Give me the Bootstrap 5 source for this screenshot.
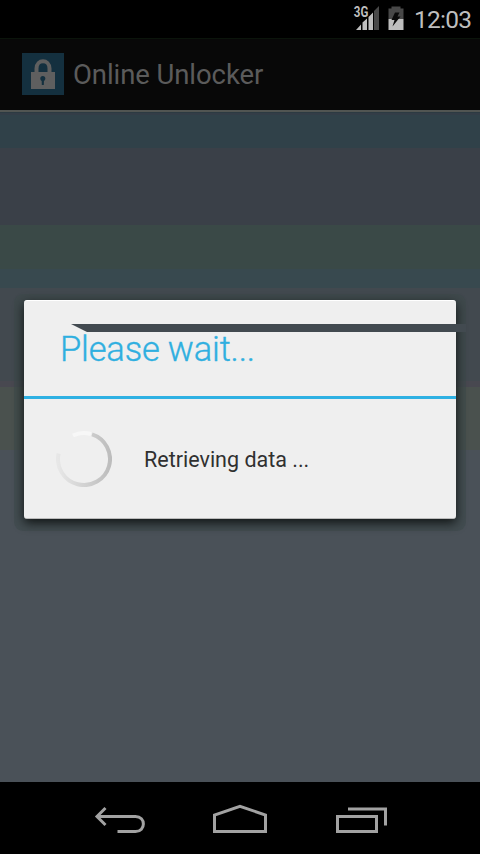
<!DOCTYPE html>
<html lang="en">
<head>
<meta charset="utf-8">
<meta name="viewport" content="width=device-width, initial-scale=1">
<title>Online Unlocker</title>
<link rel="stylesheet" href="https://cdn.jsdelivr.net/npm/bootstrap@5.3.0/dist/css/bootstrap.min.css">
<style>
body{font-family:Roboto,sans-serif;background:#000;width:480px;height:854px}
.txt{line-height:1;white-space:nowrap;display:block}
.status{height:38px;padding-right:9px}
.clock{font-size:24.5px;letter-spacing:-.75px;color:#bebebe;margin-left:9px;width:57px;padding-top:2px}
.appbar{height:72px;background:#080808;border-top:1px solid #0b140b;padding:0 0 0 22px}
.appbar-wrap{border-bottom:1px solid #2c3a42}
.lock{margin-bottom:2px}
.apptitle{font-size:27.5px;letter-spacing:-.08px;color:#5b5b5b;margin-left:9px;padding-top:1px}
.rule{height:2px;background:#515552}
.screen{height:669px;background:linear-gradient(#333d47 0 2px,#304149 2px 35px,#3a4048 35px 112px,#3a4947 112px 156px,#38494f 156px 175px,#42494f 175px 268px,#484850 268px 274px,#4a514e 274px 337px,#4a5158 337px)}
.glow{left:14px;top:294px;width:452px;height:237px;border-radius:9px;background:#3c4a4980}
.wait{left:24px;top:300px;width:432px;height:219px;border-radius:3px;background:#efefef;border-top:1px solid #fff;border-bottom:1px solid #bbb;box-shadow:0 4px 11px #101414}
.wait-head{height:98px;border-bottom:3px solid #2fb1e3;padding:31px 0 0 36px}
.wait-title{font-size:34.5px;font-weight:300;letter-spacing:-.17px;color:#2fafe0;-webkit-text-stroke:.35px #2fafe0}
.wait-text{font-size:21.5px;color:#303030;margin-left:32px;padding-top:2px}
.slash{left:71px;top:324px;width:395px;height:8px;background:#424a50;clip-path:polygon(0 0,100% 0,100% 100%,16px 100%)}
.ring{width:56px;height:56px;margin-left:32px}
.wait-body{height:119px}
.keys{height:72px}
</style>
<script src="https://cdn.jsdelivr.net/npm/bootstrap@5.3.0/dist/js/bootstrap.bundle.min.js"></script>
</head>
<body class="m-0 overflow-hidden position-relative d-flex flex-column">
<div class="status d-flex align-items-center justify-content-end flex-shrink-0">
<svg width="52" height="38" viewBox="353 0 52 38">
<path d="M379 6V30H374V11Z" fill="#484848"/>
<path d="M373 12.500V30H368.500V17ZM367 18.500V30H362.500V22.500ZM361 24.500V30H356Z" fill="#bebebe"/>
<text x="353.800" y="17.300" font-family="Roboto" font-size="14" font-weight="700" fill="#bebebe" textLength="14.500" lengthAdjust="spacingAndGlyphs">3G</text>
<path d="M388.500 8.500H391.500V6.500H400.500V8.500H403.500V19H388.500Z" fill="#484848"/>
<path d="M388.500 19H403.500V30H388.500Z" fill="#bebebe"/>
<path d="M395 12.500H399.500L397.500 16.500H400.500L392.500 26.500L394.500 20H391.500Z" fill="#0a0a0a"/>
</svg>
<span class="txt clock">12:03</span>
</div>
<header class="appbar-wrap flex-shrink-0">
<div class="appbar d-flex align-items-center">
<svg class="lock" width="42" height="42" viewBox="0 0 42 42"><path d="M0 0H42V42H0Z" fill="#14303f"/><path d="M14.500 21V15.500C14.500 5.800 27.500 5.800 27.500 15.500V21" fill="none" stroke="#5f5f5f" stroke-width="4"/><path d="M9 19H33V36H9Z" fill="#5f5f5f"/><circle cx="20.800" cy="25.500" r="2.500" fill="#14303f"/><path d="M19.600 26H22L21.800 32H19.800Z" fill="#14303f"/></svg>
<span class="txt apptitle">Online Unlocker</span>
</div>
<div class="rule"></div>
</header>
<main class="screen flex-shrink-0"></main>
<nav class="keys flex-shrink-0">
<svg class="d-block" width="480" height="72" viewBox="0 782 480 72" fill="none" stroke="#a2a2a2" stroke-width="3">
<path d="M97 816.500H135.500C146 816.500 146 831.500 135.500 831.500H117.500M105.500 808L97 816.500L105.500 825"/>
<path d="M214.500 831.500V815L240 806.300L265.500 815V831.500Z"/>
<path d="M337.500 816.500H376.500V831.500H337.500ZM348 809H385.500V825.500"/>
</svg>
</nav>
<div class="glow position-absolute"></div>
<section class="wait position-absolute" role="dialog">
<div class="wait-head"><span class="txt wait-title">Please wait...</span></div>
<div class="wait-body d-flex align-items-center">
<svg class="ring" viewBox="0 0 56 56" fill="none" stroke-width="4">
<defs><linearGradient id="fade" x1="0" y1="0" x2="1" y2="0"><stop offset="0" stop-color="#e7e7e7"/><stop offset="1" stop-color="#bdbdbd"/></linearGradient></defs>
<path d="M36 3.300A26 26 0 1 1 2.600 22.500" stroke="url(#fade)"/>
<path d="M17 4.500A26 26 0 0 1 35 3" stroke="#f7f7f7"/>
</svg>
<span class="txt wait-text">Retrieving data ...</span>
</div>
</section>
<div class="slash position-absolute"></div>
</body>
</html>
